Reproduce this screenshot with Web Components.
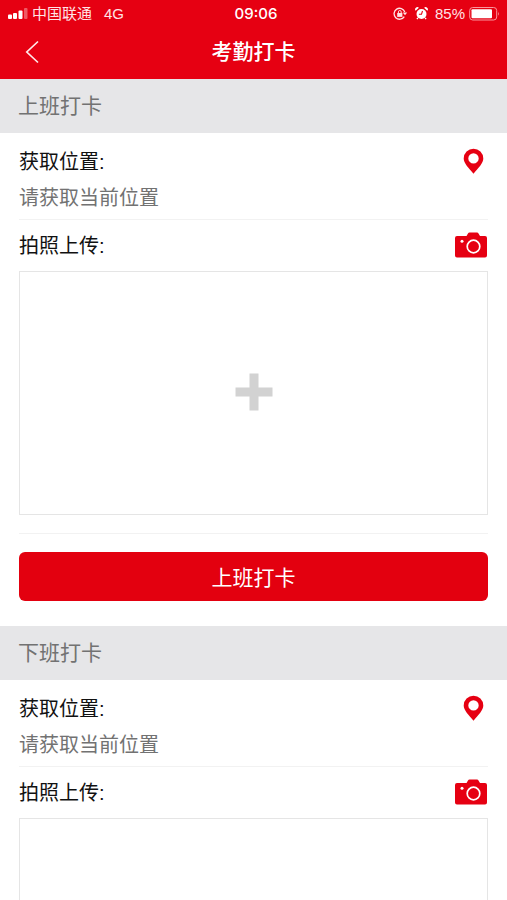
<!DOCTYPE html>
<html lang="zh-CN">
<head>
<meta charset="utf-8">
<meta name="viewport" content="width=device-width, initial-scale=1">
<title>考勤打卡</title>
<style>
  body { margin: 0; background: #fff; font-family: "Liberation Sans", "Noto Sans CJK SC", sans-serif; }
</style>
</head>
<body>
<attendance-app></attendance-app>

<template id="status-bar">
  <style>
    :host { display: grid; grid-template-columns: 1fr auto 1fr; align-items: center; height: 28px; padding: 0 7px 0 8px; color: #ffe3e5; font-size: 15px; line-height: 28px; }
    div { display: flex; align-items: center; }
    .net { margin-left: 12px; }
    .time { padding-left: 4px; color: #fff; font-weight: 500; font-family: Inter, "Liberation Sans", sans-serif; }
    .right { justify-content: flex-end; }
    .alarm { margin: 0 7px; }
    .battery { margin-left: 4px; }
    svg { display: block; flex: none; }
    .signal { margin-right: 4px; }
  </style>
  <div>
    <svg class="signal" width="20" height="12" viewBox="0 0 20 12" fill="#fff" aria-hidden="true">
      <rect y="6.500" width="4" height="4.500" rx="1"/><rect x="5" y="5" width="4" height="6" rx="1"/>
      <rect x="10.500" y="2.500" width="4" height="8.500" rx="1"/><rect x="16" y="0" width="3.500" height="11" rx="1" opacity=".35"/>
    </svg>
    <span>中国联通</span><span class="net">4G</span>
  </div>
  <div class="time">09:06</div>
  <div class="right">
    <svg width="15" height="14" viewBox="0 0 15 14" fill="none" stroke="#ffe3e5" stroke-width="1.300" aria-hidden="true">
      <path d="M11.300 9.600A5.500 5.500 0 1 1 11.800 5"/><path d="M9.700 5.400h4.500l-2.200 2.900z" fill="#ffe3e5" stroke="none"/>
      <rect x="4.200" y="6" width="5.200" height="3.900" fill="#ffe3e5" stroke="none"/><path d="M5.400 6.200V4.900a1.400 1.400 0 0 1 2.800 0v1.300" stroke-width="1"/>
    </svg>
    <svg class="alarm" width="13" height="14" viewBox="0 0 13 14" aria-hidden="true">
      <g fill="#fff"><circle cx="6.500" cy="7" r="5"/><path d="M.6 3.700A2.200 2.200 0 0 1 3.900.8zM12.400 3.700A2.200 2.200 0 0 0 9.100.8z"/></g>
      <path d="M2.900 10.900l-1 1.300M10.100 10.900l1 1.300" stroke="#fff" stroke-width="1.300"/>
      <path d="M7.500 4L6.500 7.200H3.900" fill="none" stroke="#e60012" stroke-width="1.100"/>
    </svg>
    <span>85%</span>
    <svg class="battery" width="31" height="14" viewBox="0 0 31 14" aria-hidden="true">
      <rect x=".7" y=".5" width="27" height="12.500" rx="3" fill="none" stroke="#f9969d"/>
      <rect x="2.500" y="2.200" width="20.500" height="9" rx="1" fill="#fff"/><path d="M29 4.700q1.700 2 0 4z" fill="#f9969d"/>
    </svg>
  </div>
</template>

<template id="nav-bar">
  <style>
    :host { display: grid; grid-template-columns: 63px 1fr 63px; align-items: start; height: 51px; color: #fff; }
    button { display: grid; place-items: center; height: 48px; border: 0; padding: 0; background: none; color: inherit; cursor: pointer; }
    h1 { margin: 0; text-align: center; font-size: 21px; line-height: 48px; font-weight: 500; }
  </style>
  <button type="button" aria-label="返回">
    <svg width="14" height="24" viewBox="0 0 14 24" fill="none" stroke="#ffe8e9" stroke-width="1.700" aria-hidden="true"><path d="M13 1.500L1.800 12L13 22.500"/></svg>
  </button>
  <h1><slot></slot></h1>
</template>

<template id="icon-button">
  <style>
    :host { display: block; }
    button { display: block; border: 0; padding: 0; background: none; color: #e60012; cursor: pointer; }
    svg { display: block; }
  </style>
  <button type="button"></button>
</template>

<template id="photo-box">
  <style>
    :host { display: block; }
    button { display: grid; place-items: center; width: 100%; height: 244px; border: 1px solid #e5e5e5; padding: 0 0 2px; background: #fff; cursor: pointer; }
    svg { display: block; }
  </style>
  <button type="button" aria-label="添加照片">
    <svg width="38" height="38" viewBox="0 0 38 38" aria-hidden="true"><path d="M14.500.5h9v14h14v9h-14v14h-9v-14H.5v-9h14z" fill="#d2d2d2"/></svg>
  </button>
</template>

<template id="primary-button">
  <style>
    :host { display: block; }
    button { width: 100%; height: 49px; border: 0; border-radius: 6px; padding: 0 0 2px; background: #e3000f; color: #fff; font: inherit; font-size: 21px; cursor: pointer; }
  </style>
  <button type="button"><slot></slot></button>
</template>

<template id="punch-section">
  <style>
    :host { display: block; }
    h2 { margin: 0; padding: 0 18px; background: #e6e6e8; color: #727272; font-size: 21px; line-height: 54px; font-weight: 400; }
    .body { padding: 0 19px; }
    .location { padding: 11px 0 3px; border-bottom: 1px solid #f2f2f2; }
    .row { display: flex; align-items: center; justify-content: space-between; color: #111; font-size: 20px; line-height: 36px; }
    .photo { height: 51px; }
    p { margin: 0; color: #727272; font-size: 20px; line-height: 36px; }
    .pin { margin-right: 4px; }
    .camera { margin-right: 1px; }
    ::slotted(primary-button) { margin-top: 18px; padding: 18px 0 25px; border-top: 1px solid #f2f2f2; }
  </style>
  <h2></h2>
  <div class="body">
    <div class="location">
      <div class="row"><span>获取位置:</span><icon-button class="pin" icon="pin" label="获取位置"></icon-button></div>
      <p>请获取当前位置</p>
    </div>
    <div class="row photo"><span>拍照上传:</span><icon-button class="camera" icon="camera" label="拍照上传"></icon-button></div>
    <photo-box></photo-box>
    <slot></slot>
  </div>
</template>

<template id="attendance-app">
  <style>
    :host { display: flex; flex-direction: column; height: 100vh; }
    header { flex: none; background: #e60012; }
    main { flex: 1; min-height: 0; overflow-y: auto; scrollbar-width: none; }
  </style>
  <header>
    <status-bar></status-bar>
    <nav-bar>考勤打卡</nav-bar>
  </header>
  <main>
    <punch-section heading="上班打卡"><primary-button>上班打卡</primary-button></punch-section>
    <punch-section heading="下班打卡"></punch-section>
  </main>
</template>

<script>
  class TemplateElement extends HTMLElement {
    constructor() {
      super();
      const template = document.getElementById(this.localName);
      this.attachShadow({ mode: "open" }).append(document.importNode(template.content, true));
    }
  }

  const ICONS = {
    pin: '<svg width="21" height="28" viewBox="0 0 21 28" aria-hidden="true"><path fill="currentColor" fill-rule="evenodd" d="M10.500.7A9.800 9.800 0 0 0 .7 10.500C.7 15.300 5.500 19.800 10.500 25.800C15.500 19.800 20.300 15.300 20.300 10.500A9.800 9.800 0 0 0 10.500.7zM10.500 5.200a5.200 5.200 0 1 1 0 10.400a5.200 5.200 0 0 1 0-10.400z"/></svg>',
    camera: '<svg width="32" height="28" viewBox="0 0 32 28" aria-hidden="true"><path fill="currentColor" d="M2 4h9.500l1.500-2.500Q13.500.5 14.500.5h7.500q1 0 1.500 1L25 4h5q2 0 2 2v17.500q0 2-2 2H2q-2 0-2-2V6q0-2 2-2z"/><circle cx="18.500" cy="14.500" r="6.300" fill="none" stroke="#fff" stroke-width="1.700"/><circle cx="7" cy="9.300" r="1.500" fill="#fff"/></svg>'
  };

  customElements.define("status-bar", class extends TemplateElement {});
  customElements.define("nav-bar", class extends TemplateElement {});
  customElements.define("photo-box", class extends TemplateElement {});
  customElements.define("primary-button", class extends TemplateElement {});
  customElements.define("icon-button", class extends TemplateElement {
    connectedCallback() {
      const button = this.shadowRoot.querySelector("button");
      button.innerHTML = ICONS[this.getAttribute("icon")];
      button.setAttribute("aria-label", this.getAttribute("label"));
    }
  });
  customElements.define("punch-section", class extends TemplateElement {
    connectedCallback() {
      this.shadowRoot.querySelector("h2").textContent = this.getAttribute("heading");
    }
  });
  customElements.define("attendance-app", class extends TemplateElement {});
</script>
</body>
</html>
